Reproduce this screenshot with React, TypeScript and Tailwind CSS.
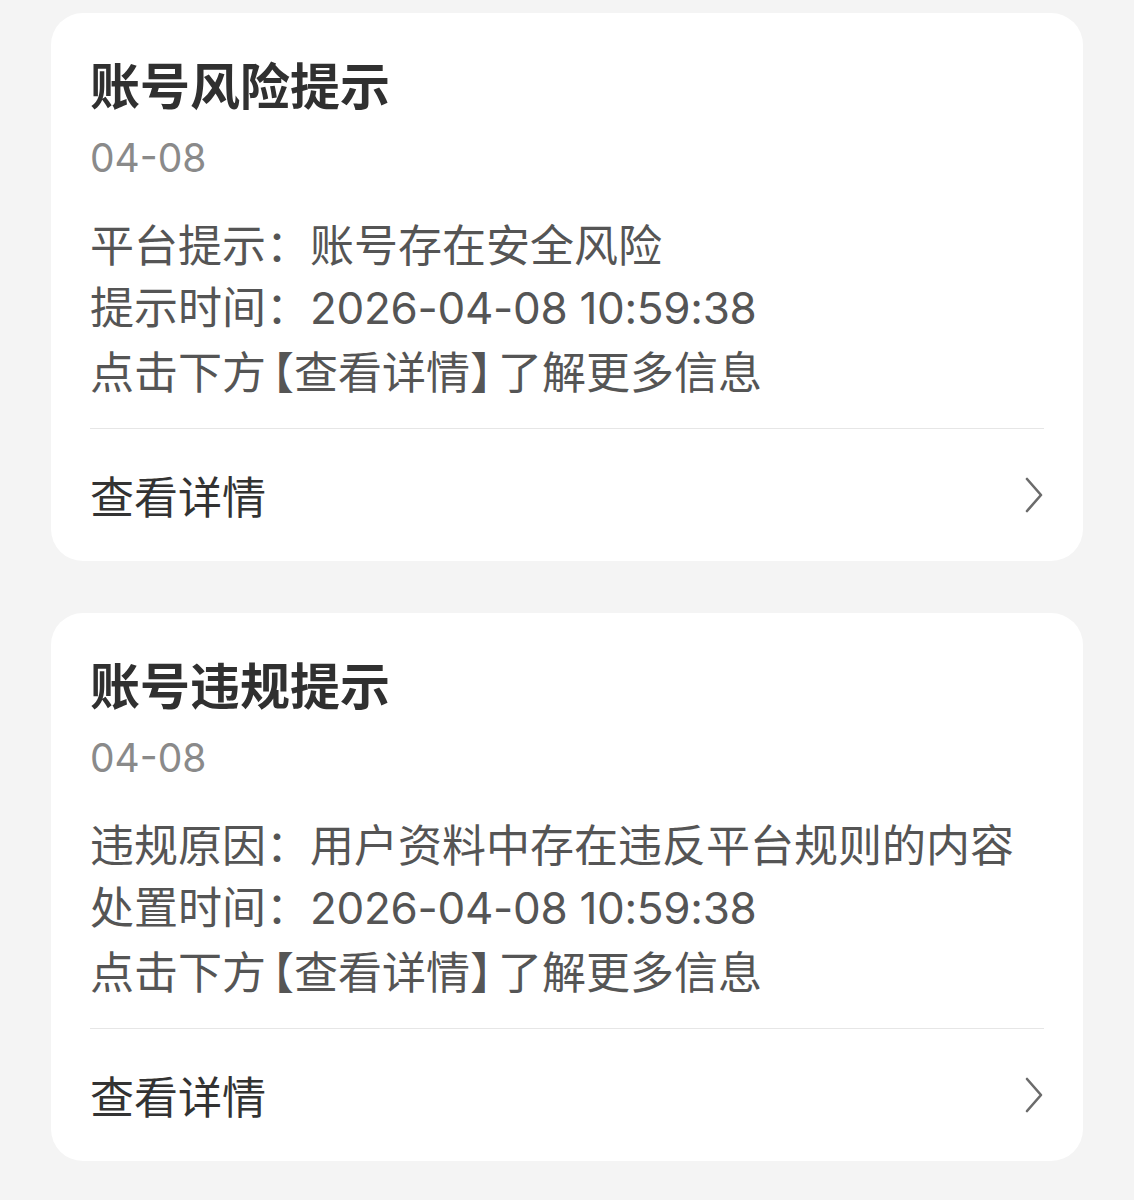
const font = { fontFamily: '"Noto Sans CJK SC", "Noto Sans", sans-serif' };
const latinFont = { fontFamily: 'Inter, "Noto Sans CJK SC", sans-serif' };
const halfWidth = { fontFeatureSettings: '"halt"' };

type Notice = {
  title: string;
  date: string;
  reason: [string, string];
  time: [string, string];
};

const notices: Notice[] = [
  {
    title: "账号风险提示",
    date: "04-08",
    reason: ["平台提示：", "账号存在安全风险"],
    time: ["提示时间：", "2026-04-08 10:59:38"],
  },
  {
    title: "账号违规提示",
    date: "04-08",
    reason: ["违规原因：", "用户资料中存在违反平台规则的内容"],
    time: ["处置时间：", "2026-04-08 10:59:38"],
  },
];

function ChevronRight() {
  return (
    <svg width="20" height="36" viewBox="0 0 20 36" fill="none" className="text-[#6b6b6b]">
      <path d="M3 2 L17 18 L3 34" stroke="currentColor" strokeWidth="2.6" strokeLinecap="round" strokeLinejoin="round" />
    </svg>
  );
}

function NoticeCard({ notice }: { notice: Notice }) {
  return (
    <div className="rounded-[32px] bg-white px-[39px] pt-[40px]">
      {/* Header */}
      <h2 className="text-[50px] leading-[60px] font-bold text-[#303030]">{notice.title}</h2>
      <p className="mt-[21px] text-[39px] leading-[48px] text-[#8a8a8a]" style={latinFont}>
        {notice.date}
      </p>

      {/* Body */}
      <div className="mt-[30px] text-[44px] leading-[62px] text-[#555555]">
        <p>{notice.reason.join("")}</p>
        <p>
          {notice.time[0]}
          <span className="tracking-[-0.3px]" style={latinFont}>
            {notice.time[1]}
          </span>
        </p>
        <p>
          点击下方
          <span className="ml-[6px]" style={halfWidth}>
            【
          </span>
          查看详情
          <span className="mr-[6px]" style={halfWidth}>
            】
          </span>
          了解更多信息
        </p>
      </div>

      <div className="mt-[27px] h-px bg-[#e6e6e6]" />

      {/* Footer link */}
      <div className="flex h-[132px] items-center justify-between">
        <span className="text-[44px] text-[#333333]">查看详情</span>
        <ChevronRight />
      </div>
    </div>
  );
}

export default function App() {
  return (
    <div className="min-h-[1200px] bg-[#f4f4f4] px-[51px] pt-[13px]" style={font}>
      <div className="flex flex-col gap-[52px]">
        {notices.map((n) => (
          <NoticeCard key={n.title} notice={n} />
        ))}
      </div>
    </div>
  );
}
